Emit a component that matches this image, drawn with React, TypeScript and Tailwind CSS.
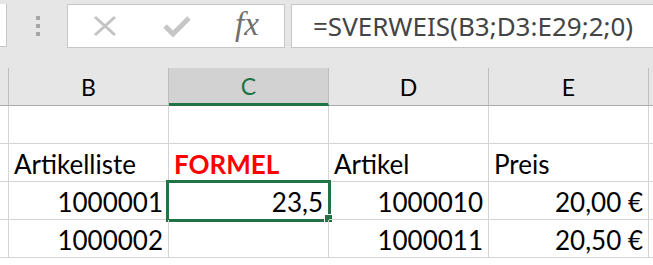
import React from "react";

const cellFont = { fontFamily: "Lato, 'Open Sans', sans-serif" };

interface Cell {
  text?: string;
  align?: "left" | "right";
  red?: boolean;
}

const rows: Cell[][] = [
  [{}, {}, {}, {}],
  [
    { text: "Artikelliste" },
    { text: "FORMEL", red: true },
    { text: "Artikel" },
    { text: "Preis" },
  ],
  [
    { text: "1000001", align: "right" },
    { text: "23,5", align: "right" },
    { text: "1000010", align: "right" },
    { text: "20,00 €", align: "right" },
  ],
  [
    { text: "1000002", align: "right" },
    {},
    { text: "1000011", align: "right" },
    { text: "20,50 €", align: "right" },
  ],
];

const columns = ["B", "C", "D", "E"];

const App: React.FC = () => {
  return (
    <div className="w-[653px] h-[265px] overflow-hidden bg-white" style={cellFont}>
      {/* Formula bar */}
      <div className="h-[68px] bg-[#e6e6e6] pt-[4px] flex items-start">
        <div className="w-[7px] h-[43px] bg-white border-r border-b border-[#c6c6c6]" />
        <div className="w-[60px] h-[43px] flex flex-col items-center justify-center gap-[4px] pl-[2px]">
          <div className="w-[4px] h-[4px] bg-[#a6a6a6]" />
          <div className="w-[4px] h-[4px] bg-[#a6a6a6]" />
          <div className="w-[4px] h-[4px] bg-[#a6a6a6]" />
        </div>
        <div className="w-[218px] h-[44px] bg-white border border-[#c6c6c6] flex items-center">
          <svg width="24" height="22" viewBox="0 0 24 22" className="ml-[25px]">
            <path d="M2 2 L22 20 M22 2 L2 20" stroke="#c3c3c3" strokeWidth="3" fill="none" />
          </svg>
          <svg width="28" height="22" viewBox="0 0 28 22" className="ml-[46px]">
            <path d="M2 11 L10 19 L26 3" stroke="#c6c6c6" strokeWidth="5" fill="none" strokeLinejoin="miter" />
          </svg>
          <span
            className="ml-[44px] italic text-[33px] leading-none text-[#6f6f6f] pb-[4px]"
            style={{ fontFamily: "'Liberation Serif', serif" }}
          >
            fx
          </span>
        </div>
        <div className="ml-[6px] flex-1 h-[44px] bg-white border border-[#c6c6c6] border-r-0 flex items-center pl-[21px]">
          <span
            className="text-[26px] leading-none text-[#444444] whitespace-nowrap"
            style={{ fontFamily: "'Noto Sans', 'Open Sans', sans-serif" }}
          >
            =SVERWEIS(B3;D3:E29;2;0)
          </span>
        </div>
      </div>

      {/* Column headers */}
      <div className="flex h-[38px] bg-[#e6e6e6]">
        <div className="w-[9px] shrink-0 border-r border-b border-r-[#bdbdbd] border-b-[#ababab]" />
        {columns.map((c) => (
          <div
            key={c}
            className={
              c === "C"
                ? "w-[160px] shrink-0 bg-[#d2d2d2] border-r border-r-[#bdbdbd] border-b-[3px] border-b-[#217346] flex items-center justify-center text-[23px] text-[#217346] pt-[1px]"
                : "w-[160px] shrink-0 border-r border-b border-r-[#bdbdbd] border-b-[#ababab] flex items-center justify-center text-[23px] text-black pt-[1px]"
            }
          >
            {c}
          </div>
        ))}
        <div className="flex-1 border-b border-b-[#ababab]" />
      </div>

      {/* Grid rows */}
      {rows.map((row, ri) => (
        <div key={ri} className="flex h-[38px]">
          <div className="w-[9px] shrink-0 border-r border-b border-[#d4d4d4]" />
          {row.map((cell, ci) => (
            <div
              key={ci}
              className={
                "relative w-[160px] shrink-0 border-r border-b border-[#d4d4d4] flex items-end pb-[1px] px-[5px] text-[26px] leading-[32px] whitespace-nowrap " +
                (cell.align === "right" ? "justify-end " : "justify-start ") +
                (cell.red ? "font-bold text-[#ff0000]" : "text-black")
              }
            >
              {cell.text}
              {ri === 2 && ci === 1 ? (
                <>
                  <div className="absolute left-[-3px] top-[-2px] w-[165px] h-[42px] border-[3px] border-[#217346] pointer-events-none" />
                  <div className="absolute left-[155px] top-[32px] w-[9px] h-[9px] bg-[#217346] border border-white" />
                </>
              ) : null}
            </div>
          ))}
          <div className="flex-1 border-b border-[#d4d4d4]" />
        </div>
      ))}
    </div>
  );
};

export default App;
